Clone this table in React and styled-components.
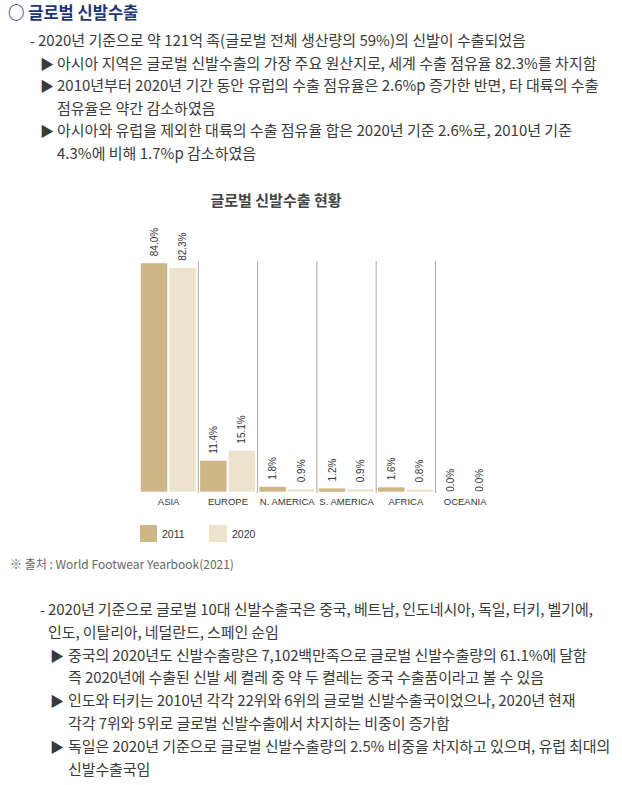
import React from "react";
import styled, { createGlobalStyle } from "styled-components";

const GlobalStyle = createGlobalStyle`
  html, body {
    margin: 0;
    padding: 0;
    background: #ffffff;
  }
  body {
    font-family: "Noto Sans CJK KR", "Noto Sans", sans-serif;
    color: #3a3a3a;
  }
`;

const regions = [
  { name: "ASIA", y2011: 84.0, y2020: 82.3 },
  { name: "EUROPE", y2011: 11.4, y2020: 15.1 },
  { name: "N. AMERICA", y2011: 1.8, y2020: 0.9 },
  { name: "S. AMERICA", y2011: 1.2, y2020: 0.9 },
  { name: "AFRICA", y2011: 1.6, y2020: 0.8 },
  { name: "OCEANIA", y2011: 0.0, y2020: 0.0 },
];

const COLOR_2011 = "#cfb686";
const COLOR_2020 = "#ede2cc";

// chart geometry, in page coordinates (viewBox starts at y=165)
const GROUP_X = 139;
const GROUP_W = 59.3;
const BAR_W = 26.5;
const BASELINE = 492.7;
const PX_PER_PCT = 2.72;

const Page = styled.div`
  width: 622px;
  padding: 0 0 10px;
`;

const Title = styled.h2`
  margin: 0 0 0 8px;
  font-size: 16.5px;
  line-height: 24px;
  font-weight: 700;
  color: #1f3576;
  white-space: nowrap;
`;

const List = styled.div`
  margin: ${({ $top }) => $top}px 0 0 ${({ $indent }) => $indent}px;
  font-size: 15px;
  line-height: ${({ $lineHeight }) => $lineHeight}px;
  letter-spacing: ${({ $tight }) => ($tight ? "-0.1px" : "0")};
`;

const Item = styled.div`
  margin-left: ${({ $sub }) => ($sub ? 10 : 0)}px;
  padding-left: ${({ $marker }) => $marker}px;
  text-indent: -${({ $marker }) => $marker}px;
  white-space: nowrap;
`;

const Marker = styled.span`
  display: inline-block;
  width: ${({ $w }) => $w}px;
  text-indent: 0;
  font-size: 14px;
`;

const ChartSvg = styled.svg`
  display: block;
  width: 622px;
  height: 385px;
`;

const ChartTitle = styled.text`
  font-family: "Noto Sans CJK KR", "Noto Sans", sans-serif;
  font-size: 15px;
  font-weight: 700;
  fill: #444444;
`;

const ValueLabel = styled.text`
  font-family: "Liberation Sans", Arial, sans-serif;
  font-size: 10px;
  fill: #333333;
`;

const AxisLabel = styled.text`
  font-family: "Liberation Sans", Arial, sans-serif;
  font-size: ${({ $size }) => $size || 9.5}px;
  fill: #333333;
`;

const Source = styled.div`
  margin: 6px 0 0 10px;
  font-size: 12px;
  line-height: 18px;
  color: #666666;
  white-space: nowrap;
`;

const Bullet = ({ dash, sub, w, children }) => (
  <Item $sub={sub} $marker={w}>
    <Marker $w={w}>{dash ? "-" : "▶"}</Marker>
    {children}
  </Item>
);

const Chart = () => {
  const bars = [];
  regions.forEach((r, i) => {
    const x0 = GROUP_X + i * GROUP_W;
    [
      { v: r.y2011, dx: 1.8, color: COLOR_2011 },
      { v: r.y2020, dx: 30.3, color: COLOR_2020 },
    ].forEach((b, j) => {
      const h = b.v * PX_PER_PCT;
      const top = BASELINE - h;
      const cx = x0 + b.dx + BAR_W / 2;
      const end = top - (b.v > 0 ? 7 : 0);
      bars.push(
        <g key={`${r.name}-${j}`}>
          {h > 0 && (
            <rect x={x0 + b.dx} y={top} width={BAR_W} height={h} fill={b.color} />
          )}
          <ValueLabel transform={`translate(${cx + 3.6} ${end}) rotate(-90)`}>
            {b.v.toFixed(1)}%
          </ValueLabel>
        </g>
      );
    });
  });

  return (
    <ChartSvg viewBox="0 165 622 385">
      <ChartTitle x={276} y={207} textAnchor="middle">
        글로벌 신발수출 현황
      </ChartTitle>
      {regions.slice(1).map((r, i) => {
        const x = GROUP_X + (i + 1) * GROUP_W;
        return (
          <line key={r.name} x1={x} x2={x} y1={262} y2={494} stroke="#a8a8a8" strokeWidth={1} />
        );
      })}
      {bars}
      {regions.map((r, i) => (
        <AxisLabel
          key={r.name}
          x={GROUP_X + i * GROUP_W + GROUP_W / 2}
          y={506}
          textAnchor="middle"
        >
          {r.name}
        </AxisLabel>
      ))}
      <rect x={140} y={526} width={17} height={17} fill={COLOR_2011} />
      <AxisLabel $size={10.5} x={162} y={538.5}>2011</AxisLabel>
      <rect x={209} y={526} width={18} height={17} fill={COLOR_2020} />
      <AxisLabel $size={10.5} x={232} y={538.5}>2020</AxisLabel>
    </ChartSvg>
  );
};

export default function App() {
  return (
    <Page>
      <GlobalStyle />
      <Title>○ 글로벌 신발수출</Title>

      <List $top={5} $indent={30} $lineHeight={22.5}>
        <Bullet dash w={8}>
          2020년 기준으로 약 121억 족(글로벌 전체 생산량의 59%)의 신발이 수출되었음
        </Bullet>
        <Bullet sub w={17}>
          아시아 지역은 글로벌 신발수출의 가장 주요 원산지로, 세계 수출 점유율 82.3%를 차지함
        </Bullet>
        <Bullet sub w={17}>
          2010년부터 2020년 기간 동안 유럽의 수출 점유율은 2.6%p 증가한 반면, 타 대륙의 수출
          <br />
          점유율은 약간 감소하였음
        </Bullet>
        <Bullet sub w={17}>
          아시아와 유럽을 제외한 대륙의 수출 점유율 합은 2020년 기준 2.6%로, 2010년 기준
          <br />
          4.3%에 비해 1.7%p 감소하였음
        </Bullet>
      </List>

      <Chart />

      <Source>※ 출처 : World Footwear Yearbook(2021)</Source>

      <List $top={25} $indent={40} $lineHeight={22.8} $tight>
        <Bullet dash w={8}>
          2020년 기준으로 글로벌 10대 신발수출국은 중국, 베트남, 인도네시아, 독일, 터키, 벨기에,
          <br />
          인도, 이탈리아, 네덜란드, 스페인 순임
        </Bullet>
        <Bullet sub w={18}>
          중국의 2020년도 신발수출량은 7,102백만족으로 글로벌 신발수출량의 61.1%에 달함
          <br />
          즉 2020년에 수출된 신발 세 켤레 중 약 두 켤레는 중국 수출품이라고 볼 수 있음
        </Bullet>
        <Bullet sub w={18}>
          인도와 터키는 2010년 각각 22위와 6위의 글로벌 신발수출국이었으나, 2020년 현재
          <br />
          각각 7위와 5위로 글로벌 신발수출에서 차지하는 비중이 증가함
        </Bullet>
        <Bullet sub w={18}>
          독일은 2020년 기준으로 글로벌 신발수출량의 2.5% 비중을 차지하고 있으며, 유럽 최대의
          <br />
          신발수출국임
        </Bullet>
      </List>
    </Page>
  );
}
